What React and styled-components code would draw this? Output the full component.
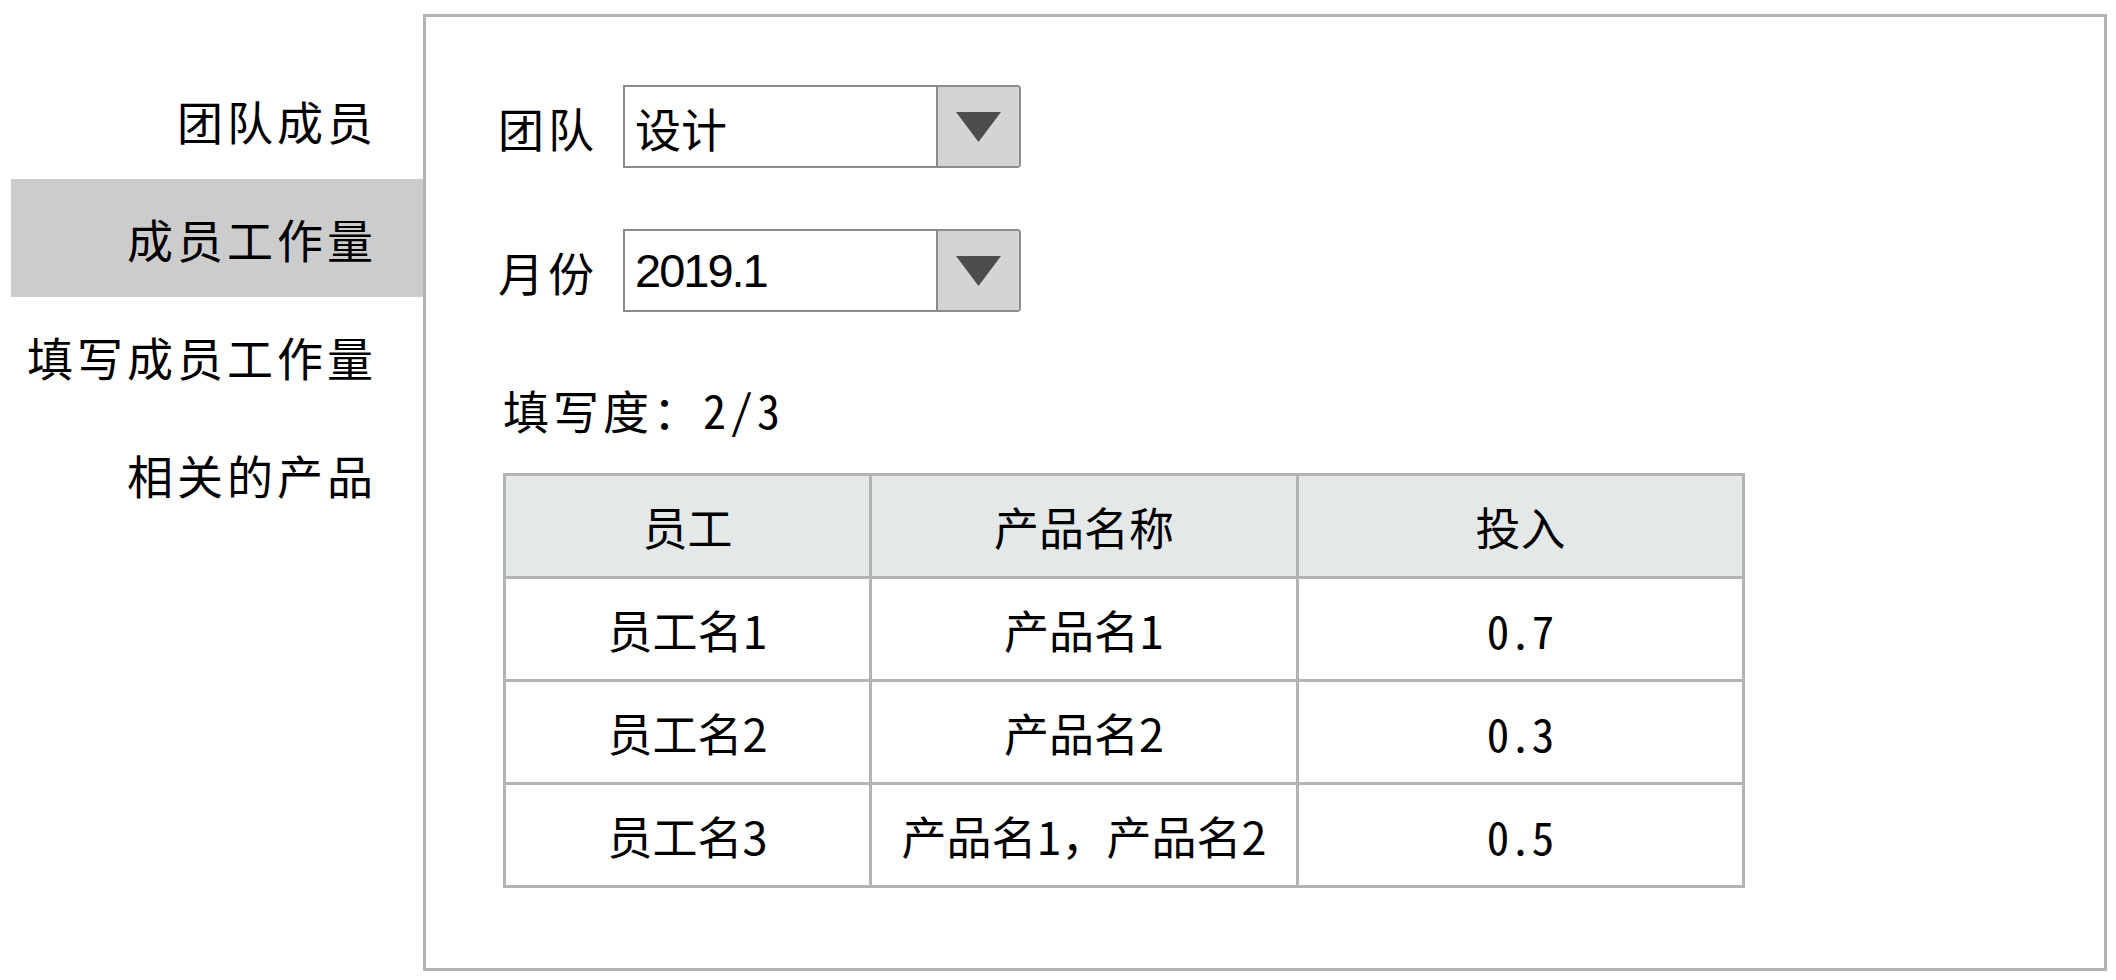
import React from "react";
import styled, { createGlobalStyle } from "styled-components";

const GlobalStyle = createGlobalStyle`
  body {
    margin: 0;
    background: #ffffff;
    font-family: "Noto Sans CJK SC", "Noto Sans", sans-serif;
    color: #000;
  }
  * {
    box-sizing: border-box;
  }
`;

const Page = styled.div`
  display: flex;
  align-items: flex-start;
  padding: 14px 0 0 11px;
`;

const Sidebar = styled.nav`
  width: 412px;
  flex-shrink: 0;
  margin-top: 47px;
  display: flex;
  flex-direction: column;
`;

const NavItem = styled.div`
  height: 118px;
  display: flex;
  align-items: center;
  justify-content: flex-end;
  padding-right: 46px;
  font-size: 46px;
  letter-spacing: 4px;
  background: ${(p) => (p.active ? "#cccccc" : "transparent")};
`;

const Panel = styled.main`
  width: 1684px;
  height: 957px;
  flex-shrink: 0;
  border: 3px solid #b3b3b3;
  padding: 68px 0 0 72px;
  display: flex;
  flex-direction: column;
`;

const FieldRow = styled.div`
  display: flex;
  align-items: center;
  margin-bottom: 61px;
`;

const Label = styled.span`
  font-size: 46px;
  letter-spacing: 4px;
  margin-right: 25px;
  line-height: 1;
`;

const Select = styled.div`
  width: 398px;
  height: 83px;
  flex-shrink: 0;
  display: flex;
  border: 2px solid #8c8c8c;
  border-radius: 0 4px 4px 0;
  background: #fff;
`;

const SelectValue = styled.div`
  flex: 1;
  display: flex;
  align-items: center;
  padding-left: 10px;
  font-size: ${(p) => (p.latin ? "47px" : "46px")};
  font-family: ${(p) =>
    p.latin
      ? `"Liberation Sans", Arial, sans-serif`
      : `"Noto Sans CJK SC", sans-serif`};
  letter-spacing: ${(p) => (p.latin ? "-2px" : "0")};
`;

const SelectButton = styled.div`
  width: 83px;
  display: flex;
  align-items: center;
  justify-content: center;
  background: #d4d4d4;
  border-left: 2px solid #8c8c8c;
  border-radius: 0 3px 3px 0;
`;

const Progress = styled.div`
  margin-top: 13px;
  padding-left: 5px;
  font-size: 46px;
  letter-spacing: 4px;
  line-height: 46px;
`;

const Num = styled.span`
  font-feature-settings: "hwid" 1;
`;

const Table = styled.table`
  margin: 41px 0 0 5px;
  width: 1239px;
  border-collapse: collapse;
  table-layout: fixed;
  border: 3px solid #b3b3b3;
`;

const Cell = styled.td`
  height: 103px;
  padding: 0;
  border: 3px solid #b3b3b3;
  text-align: center;
  vertical-align: middle;
  font-size: 45px;
  font-weight: 400;
  background: ${(p) => (p.head ? "#e5e8e9" : "#ffffff")};
`;

function Caret() {
  return (
    <svg width="45" height="30" viewBox="0 0 45 30">
      <polygon points="0,0 45,0 22.5,30" fill="#4d4d4d" />
    </svg>
  );
}

const navItems = ["团队成员", "成员工作量", "填写成员工作量", "相关的产品"];

const rows = [
  ["员工名1", "产品名1", "0.7"],
  ["员工名2", "产品名2", "0.3"],
  ["员工名3", "产品名1，产品名2", "0.5"],
];

export default function App() {
  return (
    <>
      <GlobalStyle />
      <Page>
        <Sidebar>
          {navItems.map((item, i) => (
            <NavItem key={item} active={i === 1}>
              {item}
            </NavItem>
          ))}
        </Sidebar>
        <Panel>
          <FieldRow>
            <Label>团队</Label>
            <Select>
              <SelectValue>设计</SelectValue>
              <SelectButton>
                <Caret />
              </SelectButton>
            </Select>
          </FieldRow>
          <FieldRow>
            <Label>月份</Label>
            <Select>
              <SelectValue latin>2019.1</SelectValue>
              <SelectButton>
                <Caret />
              </SelectButton>
            </Select>
          </FieldRow>
          <Progress>
            填写度：<Num>2/3</Num>
          </Progress>
          <Table>
            <colgroup>
              <col style={{ width: 366 }} />
              <col style={{ width: 427 }} />
              <col style={{ width: 446 }} />
            </colgroup>
            <thead>
              <tr>
                <Cell as="th" head>员工</Cell>
                <Cell as="th" head>产品名称</Cell>
                <Cell as="th" head>投入</Cell>
              </tr>
            </thead>
            <tbody>
              {rows.map((r) => (
                <tr key={r[0]}>
                  <Cell>{r[0]}</Cell>
                  <Cell>{r[1]}</Cell>
                  <Cell>
                    <Num>{r[2]}</Num>
                  </Cell>
                </tr>
              ))}
            </tbody>
          </Table>
        </Panel>
      </Page>
    </>
  );
}
